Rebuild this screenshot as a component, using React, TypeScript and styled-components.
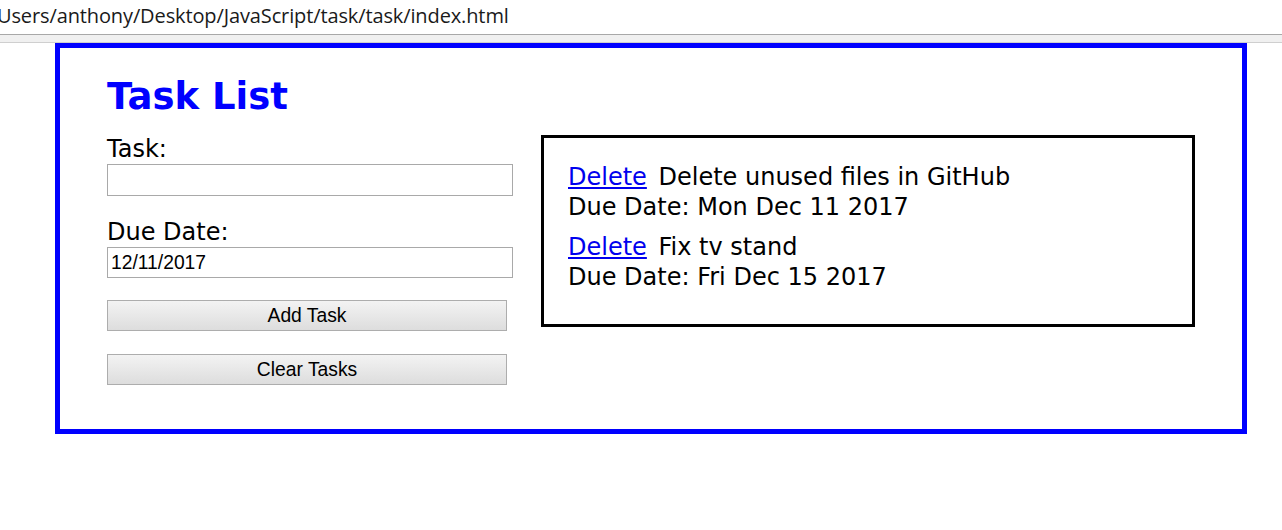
import React from "react";
import styled, { createGlobalStyle } from "styled-components";

const GlobalStyle = createGlobalStyle`
  html, body {
    margin: 0;
    padding: 0;
    background: #ffffff;
  }
  body {
    font-family: "DejaVu Sans", Verdana, sans-serif;
    color: #000;
  }
`;

const AddressBar = styled.div`
  height: 34px;
  box-sizing: border-box;
  padding-top: 2px;
  overflow: hidden;
  white-space: nowrap;
`;

const AddressText = styled.span`
  display: inline-block;
  margin-left: -3px;
  font-family: "Open Sans", "Noto Sans", sans-serif;
  font-size: 20px;
  line-height: 27px;
  letter-spacing: -0.12px;
  color: #1a1a1a;
`;

const ToolbarBand = styled.div`
  height: 7px;
  background: #f0f0f0;
  border-top: 1px solid #a8a8a8;
  border-bottom: 1px solid #cfcfcf;
`;

const Card = styled.main`
  box-sizing: border-box;
  width: 1192px;
  margin: 0 0 0 55px;
  border: 5px solid #0000ff;
  padding: 28px 47px 44px;
`;

const Title = styled.h1`
  margin: 0 0 17px;
  font-family: "DejaVu Sans", Verdana, sans-serif;
  font-weight: bold;
  font-size: 37px;
  line-height: 42px;
  color: #0000ff;
`;

const Columns = styled.div`
  display: grid;
  grid-template-columns: 406px 654px;
  column-gap: 28px;
  align-items: start;
`;

const FormColumn = styled.form`
  display: flex;
  flex-direction: column;
  align-items: flex-start;
  margin: 0;
`;

const FieldLabel = styled.label<{ $gap?: number }>`
  display: block;
  margin-top: ${(p) => p.$gap ?? 0}px;
  font-family: "DejaVu Sans", Verdana, sans-serif;
  font-size: 24px;
  line-height: 28px;
`;

const TextField = styled.input<{ $h: number }>`
  box-sizing: border-box;
  width: 406px;
  height: ${(p) => p.$h}px;
  margin: 1px 0 0;
  padding: 0 3px;
  border: 1px solid #a9a9a9;
  border-radius: 0;
  background: #fff;
  font-family: "Liberation Sans", Arial, sans-serif;
  font-size: 19.3px;
  color: #000;
  outline: none;
`;

const ActionButton = styled.button<{ $gap: number }>`
  box-sizing: border-box;
  width: 400px;
  height: 31px;
  margin-top: ${(p) => p.$gap}px;
  padding: 0;
  border: 1px solid #adadad;
  border-radius: 0;
  background: linear-gradient(#f3f3f3, #dddddd);
  font-family: "Liberation Sans", Arial, sans-serif;
  font-size: 19.3px;
  color: #000;
  cursor: pointer;
`;

const TaskBox = styled.section`
  box-sizing: border-box;
  border: 3px solid #000;
  padding: 24px 22px 22px 24px;
  font-family: "DejaVu Sans", Verdana, sans-serif;
  font-size: 24px;
  line-height: 30px;
`;

const TaskItem = styled.div`
  margin-bottom: 10px;
`;

const TaskLine = styled.div`
  white-space: nowrap;
`;

const DeleteLink = styled.a`
  color: #0000ee;
  text-decoration: underline;
  margin-right: 4px;
`;

const tasks = [
  { name: "Delete unused files in GitHub", due: "Mon Dec 11 2017" },
  { name: "Fix tv stand", due: "Fri Dec 15 2017" },
];

export default function App() {
  return (
    <>
      <GlobalStyle />
      <AddressBar>
        <AddressText>Users/anthony/Desktop/JavaScript/task/task/index.html</AddressText>
      </AddressBar>
      <ToolbarBand />
      <Card>
        <Title>Task List</Title>
        <Columns>
          <FormColumn onSubmit={(e) => e.preventDefault()}>
            <FieldLabel htmlFor="task">Task:</FieldLabel>
            <TextField id="task" type="text" $h={32} />
            <FieldLabel htmlFor="due" $gap={22}>
              Due Date:
            </FieldLabel>
            <TextField id="due" type="text" defaultValue="12/11/2017" $h={31} />
            <ActionButton type="button" $gap={22}>
              Add Task
            </ActionButton>
            <ActionButton type="button" $gap={23}>
              Clear Tasks
            </ActionButton>
          </FormColumn>
          <TaskBox>
            {tasks.map((t) => (
              <TaskItem key={t.name}>
                <TaskLine>
                  <DeleteLink href="#">Delete</DeleteLink> {t.name}
                </TaskLine>
                <TaskLine>Due Date: {t.due}</TaskLine>
              </TaskItem>
            ))}
          </TaskBox>
        </Columns>
      </Card>
    </>
  );
}
